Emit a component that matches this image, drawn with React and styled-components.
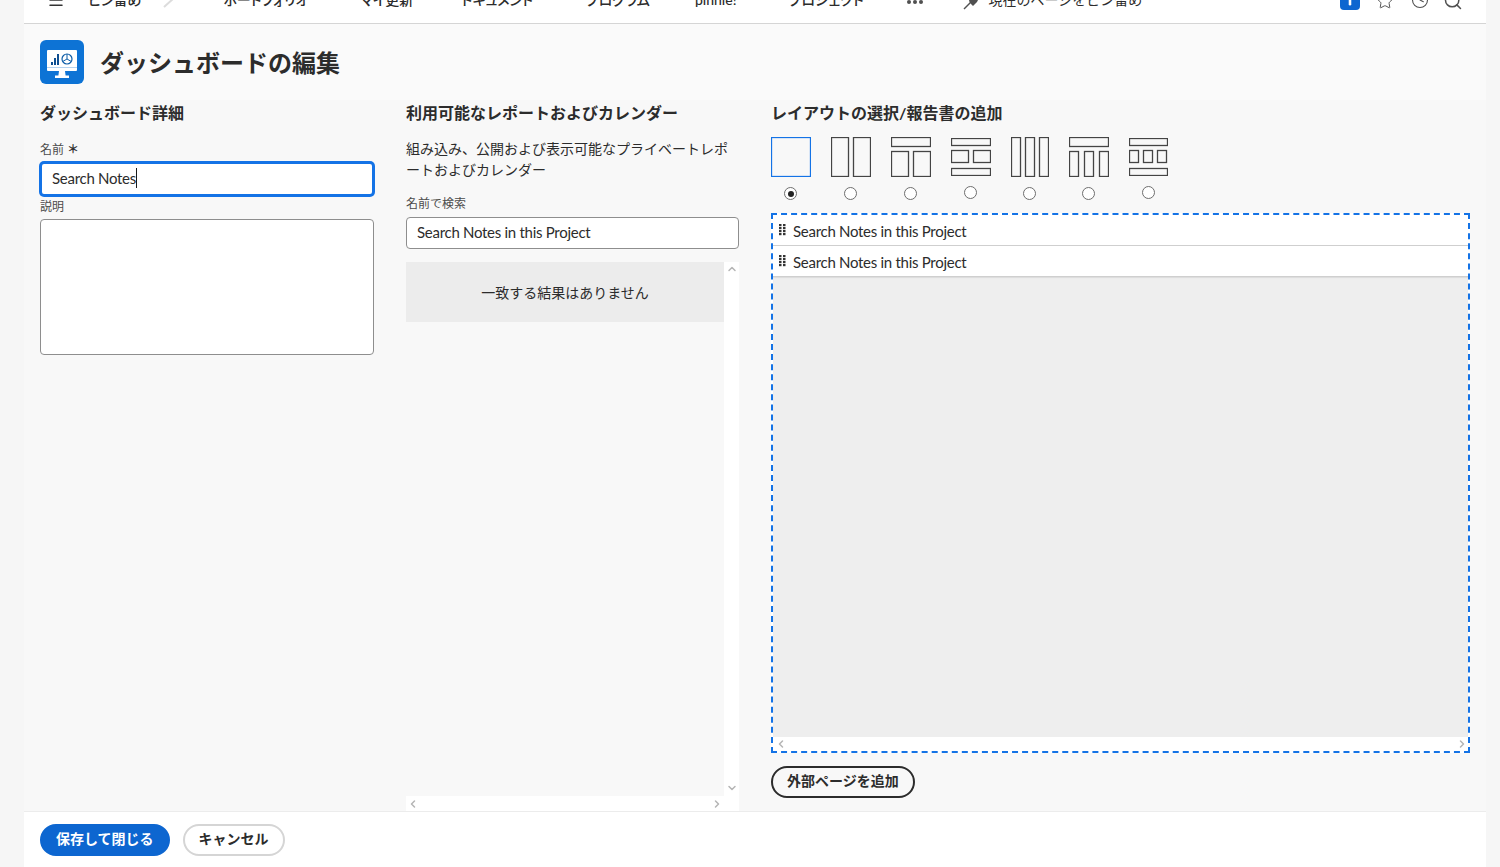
import React from "react";
import styled, { createGlobalStyle } from "styled-components";
import {
  ChevronDown,
  ChevronLeft,
  ChevronRight,
  ChevronUp,
  History,
  Menu,
  Plus,
  Search,
  Star,
} from "lucide-react";

const GlobalStyle = createGlobalStyle`
  html, body {
    margin: 0;
    padding: 0;
    height: 100%;
    overflow: hidden;
    background: #f6f6f6;
    color: #2c2c2c;
    font-family: "Lato", "Noto Sans CJK JP", sans-serif;
    font-size: 14px;
  }
  * {
    box-sizing: border-box;
  }
`;

const Page = styled.div`
  width: 1462px;
  height: 867px;
  margin-left: 24px;
  display: flex;
  flex-direction: column;
  background: #f8f8f8;
`;

const TopNav = styled.nav`
  height: 24px;
  flex: none;
  overflow: hidden;
  background: #fff;
  border-bottom: 1px solid #d5d5d5;
`;

const NavRow = styled.div`
  height: 48px;
  margin-top: -25px;
  padding: 0 23px;
  display: flex;
  align-items: center;
`;

const MenuIcon = styled(Menu)`
  flex: none;
  margin-top: 1px;
  color: #333;
`;

const NavLink = styled.span`
  flex: none;
  font-weight: ${(p) => (p.$plain ? 400 : 500)};
  font-feature-settings: ${(p) => (p.$plain ? "normal" : '"palt"')};
  white-space: nowrap;
  margin-left: ${(p) => p.$gap}px;
  color: #2c2c2c;
`;

const Slash = styled.svg`
  flex: none;
  margin-left: 22px;
  color: #dcdcdc;
`;

const Dots = styled.span`
  flex: none;
  display: flex;
  gap: 2px;
  margin: 5px 0 0 43px;

  i {
    width: 4px;
    height: 4px;
    border-radius: 50%;
    background: #505050;
  }
`;

const PinIcon = styled.svg`
  flex: none;
  margin-left: 40px;
  color: #505050;
`;

const NavTools = styled.div`
  margin-left: auto;
  display: flex;
  align-items: center;
  gap: 16px;
  color: #505050;
`;

const AddButton = styled.span`
  width: 20px;
  height: 28px;
  margin-top: -6px;
  border-radius: 4px;
  background: #0d66d0;
  color: #fff;
  display: flex;
  align-items: center;
  justify-content: center;
  overflow: hidden;

  svg {
    flex: none;
  }
`;

const StarTool = styled(Star)`
  flex: none;
  margin-top: 4px;
`;

const HistoryTool = styled(History)`
  flex: none;
  margin-top: 1px;
`;

const SearchTool = styled(Search)`
  flex: none;
  margin: 3px 0 0 -3px;
`;

const TitleBar = styled.header`
  height: 76px;
  flex: none;
  padding: 16px 16px 0;
  display: flex;
  align-items: flex-start;
  gap: 16px;
  background: #fafafa;
`;

const Title = styled.h1`
  margin: 0;
  font-size: 24px;
  font-weight: 700;
  line-height: 46px;
  color: #2c2c2c;
`;

const Columns = styled.main`
  flex: 1;
  min-height: 0;
  padding: 0 16px;
  display: grid;
  grid-template-columns: 334px 333px 699px;
  column-gap: 32px;
`;

const Column = styled.section`
  min-width: 0;
  display: flex;
  flex-direction: column;
`;

const LayoutColumn = styled(Column)`
  padding-bottom: 13px;
  align-items: flex-start;
`;

const Heading = styled.h2`
  margin: 0;
  font-size: 16px;
  font-weight: 700;
  line-height: 26px;
`;

const FieldLabel = styled.label`
  display: block;
  font-size: 12px;
  line-height: 16px;
  color: #4b4b4b;
  margin-top: ${(p) => p.$top}px;
  margin-bottom: ${(p) => p.$bottom}px;
`;

const Required = styled.span`
  font-weight: 700;
  color: #333;
`;

const NameInput = styled.div`
  height: 34px;
  padding-left: 10px;
  display: flex;
  align-items: center;
  background: #fff;
  border: 2px solid #1473e6;
  border-radius: 4px;
  box-shadow: 0 0 0 1px #1473e6;
  font-size: 15px;
  letter-spacing: -0.28px;
  line-height: 26px;
  padding-bottom: 2px;
`;

const Caret = styled.span`
  width: 1px;
  height: 20px;
  background: #1a1a1a;
`;

const TextArea = styled.textarea`
  display: block;
  width: 100%;
  height: 136px;
  padding: 6px 10px;
  resize: none;
  background: #fff;
  border: 1px solid #8e8e8e;
  border-radius: 4px;
  outline: none;
`;

const Help = styled.p`
  margin: 12px 0 0;
  line-height: 21px;
  font-size: 14px;
`;

const SearchInput = styled.input`
  display: block;
  width: 100%;
  height: 32px;
  padding: 0 10px 2px;
  background: #fff;
  border: 1px solid #8e8e8e;
  border-radius: 4px;
  outline: none;
  font: inherit;
  font-size: 15px;
  letter-spacing: -0.28px;
  color: #2c2c2c;
`;

const ResultPane = styled.div`
  flex: 1;
  min-height: 0;
  margin-top: 13px;
  display: grid;
  grid-template-columns: 318px 15px;
  grid-template-rows: 1fr 15px;
`;

const ResultList = styled.div`
  min-height: 0;
`;

const EmptyResult = styled.div`
  height: 60px;
  display: flex;
  align-items: center;
  justify-content: center;
  background: #ececec;
  font-size: 14px;
`;

const Scrollbar = styled.div`
  display: flex;
  align-items: center;
  justify-content: space-between;
  flex-direction: ${(p) => (p.$vertical ? "column" : "row")};
  padding: ${(p) => (p.$vertical ? "1px 0 2px" : "0 1px")};
  background: #fff;
  color: #b5b5b5;
`;

const Corner = styled.div`
  background: #fff;
`;

const LayoutPicker = styled.div`
  margin-top: 11px;
  display: flex;
  gap: 20px;
`;

const LayoutOption = styled.div`
  display: flex;
  flex-direction: column;
  align-items: center;
  gap: 10px;
  padding-top: ${(p) => (p.$height < 40 ? 1 : 0)}px;

  svg {
    display: block;
  }
  rect {
    fill: none;
    stroke: ${(p) => (p.$selected ? "#1473e6" : "#444")};
    stroke-width: 1.3;
  }
`;

const Radio = styled.span`
  width: 13px;
  height: 13px;
  margin-right: 1px;
  border-radius: 50%;
  border: 1.7px solid #6e6e6e;
  background: #fff;
  display: flex;
  align-items: center;
  justify-content: center;

  &::after {
    content: "";
    width: 6px;
    height: 6px;
    border-radius: 50%;
    background: ${(p) => (p.$checked ? "#222" : "transparent")};
  }
`;

const DropZone = styled.div`
  align-self: stretch;
  flex: 1;
  min-height: 0;
  margin-top: 13px;
  border: 2px dashed #1473e6;
  display: flex;
  flex-direction: column;
  background: #fff;
`;

const ReportRow = styled.div`
  height: ${(p) => p.$height}px;
  flex: none;
  padding: 2px 0 0 6px;
  display: flex;
  align-items: center;
  gap: 7px;
  background: #fff;
  border-bottom: 1px solid #cfcfcf;
  font-size: 15px;
  letter-spacing: -0.28px;
`;

const Grip = styled.svg`
  flex: none;
  margin-top: -3px;
  color: #333;
`;

const DropArea = styled.div`
  flex: 1;
  min-height: 0;
  background: #eeeeee;
  box-shadow: inset 0 1px 1px rgba(0, 0, 0, 0.08);
`;

const ZoneScroll = styled(Scrollbar)`
  height: 14px;
  flex: none;
  padding: 0 0 0 2px;
`;

const Pill = styled.button`
  height: 32px;
  padding: 0 ${(p) => p.$pad}px 5px;
  border-radius: 16px;
  border: 2px solid ${(p) => p.$border};
  background: ${(p) => p.$bg};
  color: ${(p) => p.$color};
  font: inherit;
  font-size: 14px;
  font-weight: 700;
  display: inline-flex;
  align-items: center;
  white-space: nowrap;
`;

const AddPageButton = styled(Pill)`
  margin-top: 13px;
`;

const Footer = styled.footer`
  height: 56px;
  flex: none;
  padding: 12px 16px 0;
  display: flex;
  align-items: flex-start;
  gap: 13px;
  background: #fff;
  border-top: 1px solid #ececec;
`;

const layouts = [
  { w: 40, h: 40, rects: [[0, 0, 40, 40]] },
  { w: 40, h: 40, rects: [[0, 0, 18, 40], [22, 0, 18, 40]] },
  { w: 40, h: 40, rects: [[0, 0, 40, 10], [0, 14, 18, 26], [22, 14, 18, 26]] },
  { w: 40, h: 38, rects: [[0, 0, 40, 8], [0, 12, 18, 13], [22, 12, 18, 13], [0, 30, 40, 8]] },
  { w: 38, h: 40, rects: [[0, 0, 10, 40], [14, 0, 10, 40], [28, 0, 10, 40]] },
  { w: 40, h: 40, rects: [[0, 0, 40, 10], [0, 14, 10, 26], [15, 14, 10, 26], [30, 14, 10, 26]] },
  { w: 39, h: 38, rects: [[0, 0, 39, 8], [0, 12, 10, 13], [14, 12, 10, 13], [28, 12, 10, 13], [0, 30, 39, 8]] },
];

const ProductIcon = () => (
  <svg width="44" height="44" viewBox="0 0 44 44" style={{ flex: "none" }}>
    <rect width="44" height="44" rx="6" fill="#0d73d5" />
    <rect x="7" y="10" width="30" height="21" rx="1" fill="#fff" />
    <rect x="7" y="27" width="30" height="1" fill="#b5d3f0" />
    <path d="M19 31h6l.6 4.500H29V38H15v-2.500h3.400z" fill="#fff" />
    <rect x="11" y="22" width="2" height="3" fill="#0f4f91" />
    <rect x="14" y="18" width="2" height="7" fill="#0f4f91" />
    <rect x="17" y="14" width="2" height="11" fill="#0f4f91" />
    <circle cx="27" cy="19" r="5" fill="none" stroke="#0f5ea8" strokeWidth="1.200" />
    <path d="M27 14v5l4.300 2.500M27 19l-4.300 2.500" fill="none" stroke="#0f5ea8" strokeWidth="1" />
  </svg>
);

const GripDots = () => (
  <Grip width="7" height="12" viewBox="0 0 7 12" fill="currentColor">
    {[0, 3, 6, 9].map((y) => (
      <React.Fragment key={y}>
        <rect x="0" y={y} width="2.500" height="2.200" />
        <rect x="4" y={y} width="2.500" height="2.200" />
      </React.Fragment>
    ))}
  </Grip>
);

export default function App() {
  return (
    <>
      <GlobalStyle />
      <Page>
        <TopNav>
          <NavRow>
            <MenuIcon size={18} strokeWidth={2} />
            <NavLink $gap={23}>ピン留め</NavLink>
            <Slash width="12" height="48" viewBox="0 0 12 48">
              <path d="M1 32L11 23" stroke="currentColor" strokeWidth="2" />
            </Slash>
            <NavLink $gap={48}>ポートフォリオ</NavLink>
            <NavLink $gap={52}>マイ更新</NavLink>
            <NavLink $gap={48}>ドキュメント</NavLink>
            <NavLink $gap={53}>プログラム</NavLink>
            <NavLink $gap={45}>pinnie!</NavLink>
            <NavLink $gap={52}>プロジェクト</NavLink>
            <Dots>
              <i />
              <i />
              <i />
            </Dots>
            <PinIcon width="16" height="48" viewBox="0 0 16 48" fill="currentColor">
              <path d="M1 34l7-7" stroke="currentColor" strokeWidth="1.500" />
              <path d="M6 25h9l-1 2-4 4-2-2-1.500-2z" />
            </PinIcon>
            <NavLink $gap={10} $plain>
              現在のページをピン留め
            </NavLink>
            <NavTools>
              <AddButton>
                <Plus size={28} strokeWidth={2.200} />
              </AddButton>
              <StarTool size={18} strokeWidth={1.300} />
              <HistoryTool size={20} strokeWidth={1.300} />
              <SearchTool size={20} strokeWidth={1.800} />
            </NavTools>
          </NavRow>
        </TopNav>

        <TitleBar>
          <ProductIcon />
          <Title>ダッシュボードの編集</Title>
        </TitleBar>

        <Columns>
          <Column>
            <Heading>ダッシュボード詳細</Heading>
            <FieldLabel $top={16} $bottom={4}>
              名前 <Required>＊</Required>
            </FieldLabel>
            <NameInput>
              Search Notes
              <Caret />
            </NameInput>
            <FieldLabel $top={3} $bottom={4}>
              説明
            </FieldLabel>
            <TextArea />
          </Column>

          <Column>
            <Heading>利用可能なレポートおよびカレンダー</Heading>
            <Help>組み込み、公開および表示可能なプライベートレポートおよびカレンダー</Help>
            <FieldLabel $top={16} $bottom={5}>
              名前で検索
            </FieldLabel>
            <SearchInput readOnly value="Search Notes in this Project" />
            <ResultPane>
              <ResultList>
                <EmptyResult>一致する結果はありません</EmptyResult>
              </ResultList>
              <Scrollbar $vertical>
                <ChevronUp size={12} strokeWidth={3} />
                <ChevronDown size={12} strokeWidth={3} />
              </Scrollbar>
              <Scrollbar>
                <ChevronLeft size={12} strokeWidth={3} />
                <ChevronRight size={12} strokeWidth={3} />
              </Scrollbar>
              <Corner />
            </ResultPane>
          </Column>

          <LayoutColumn>
            <Heading>レイアウトの選択/報告書の追加</Heading>
            <LayoutPicker>
              {layouts.map((l, i) => (
                <LayoutOption key={i} $height={l.h} $selected={i === 0}>
                  <svg
                    width={l.w}
                    height={l.h}
                    viewBox={`-0.5 -0.5 ${l.w} ${l.h}`}
                  >
                    {l.rects.map(([x, y, w, h], j) => (
                      <rect key={j} x={x} y={y} width={w - 1} height={h - 1} />
                    ))}
                  </svg>
                  <Radio $checked={i === 0} />
                </LayoutOption>
              ))}
            </LayoutPicker>
            <DropZone>
              <ReportRow $height={31}>
                <GripDots />
                Search Notes in this Project
              </ReportRow>
              <ReportRow $height={31}>
                <GripDots />
                Search Notes in this Project
              </ReportRow>
              <DropArea />
              <ZoneScroll>
                <ChevronLeft size={12} strokeWidth={3} />
                <ChevronRight size={12} strokeWidth={3} />
              </ZoneScroll>
            </DropZone>
            <AddPageButton $pad={14} $border="#2c2c2c" $bg="transparent" $color="#2c2c2c">
              外部ページを追加
            </AddPageButton>
          </LayoutColumn>
        </Columns>

        <Footer>
          <Pill $pad={14} $border="#0d66d0" $bg="#0d66d0" $color="#fff">
            保存して閉じる
          </Pill>
          <Pill $pad={14} $border="#d5d5d5" $bg="#fff" $color="#2c2c2c">
            キャンセル
          </Pill>
        </Footer>
      </Page>
    </>
  );
}
